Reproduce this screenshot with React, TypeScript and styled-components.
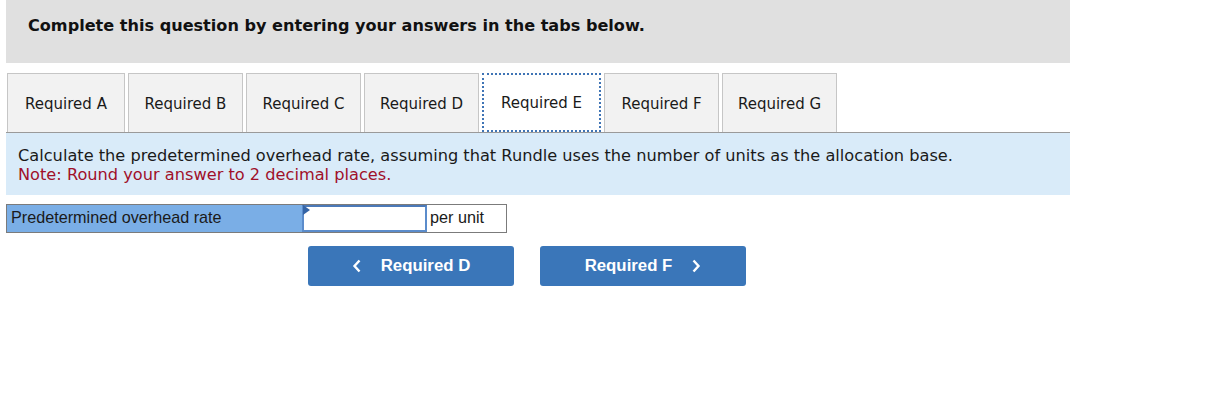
import styled, { createGlobalStyle } from 'styled-components';

const GlobalStyle = createGlobalStyle`
  body {
    margin: 0;
    background: #ffffff;
    font-family: "DejaVu Sans", Verdana, sans-serif;
  }
`;

const Page = styled.div`
  width: 1064px;
  margin-left: 6px;
`;

const Header = styled.div`
  height: 63px;
  background-color: #e0e0e0;
  padding: 16px 0 0 22px;
  box-sizing: border-box;
  h1 {
    margin: 0;
    font-size: 16.1px;
    font-weight: bold;
    color: #111;
  }
`;

const TabBar = styled.div`
  display: flex;
  gap: 3px;
  margin-top: 10px;
  padding-left: 1px;
  border-bottom: 1px solid #9a9a9a;
`;

const Tab = styled.button<{ active?: boolean; w: number }>`
  width: ${({ w }) => w}px;
  height: 59px;
  box-sizing: border-box;
  font-family: "DejaVu Sans", Verdana, sans-serif;
  font-size: 15px;
  color: #1a1a1a;
  background-color: ${({ active }) => (active ? '#ffffff' : '#f2f2f2')};
  border: ${({ active }) => (active ? '2px dotted #3f74b5' : '1px solid #c6c6c6')};
  border-bottom: ${({ active }) => (active ? '2px dotted #3f74b5' : 'none')};
  padding: 1px 0 0;
  cursor: pointer;
`;

const Instructions = styled.div`
  background-color: #d9ebf9;
  height: 62px;
  padding: 13px 0 0 12px;
  box-sizing: border-box;
  font-size: 16.2px;
  line-height: 19px;
  color: #1a1a1a;
`;

const Note = styled.div`
  color: #a0102a;
`;

const AnswerRow = styled.div`
  display: flex;
  margin-top: 9px;
  height: 29px;
  font-family: "Liberation Sans", Arial, sans-serif;
  font-size: 16.2px;
`;

const LabelCell = styled.div`
  width: 296px;
  box-sizing: border-box;
  background-color: #7aaee6;
  border: 1px solid #7b7b7b;
  border-right: none;
  color: #1a1a1a;
  padding: 3px 0 0 4px;
`;

const InputWrap = styled.div`
  position: relative;
  width: 125px;
  box-sizing: border-box;
  border-top: 1px solid #7b7b7b;
  border-bottom: 1px solid #7b7b7b;
  background: #7aaee6;
  &::before {
    content: '';
    position: absolute;
    left: 1px;
    top: 0;
    width: 0;
    height: 0;
    border-top: 5px solid transparent;
    border-bottom: 5px solid transparent;
    border-left: 7px solid #3464a6;
  }
`;

const AmountInput = styled.input`
  width: 100%;
  height: 100%;
  box-sizing: border-box;
  border: 2px solid #5b8ccb;
  border-top-color: #4b79b8;
  background: #ffffff;
  outline: none;
  margin: 0;
  padding: 0 4px;
`;

const UnitCell = styled.div`
  width: 80px;
  box-sizing: border-box;
  border: 1px solid #7b7b7b;
  border-left: none;
  padding: 3px 0 0 3px;
  color: #1a1a1a;
`;

const NavRow = styled.div`
  display: flex;
  gap: 26px;
  margin-top: 13px;
  padding-left: 302px;
`;

const NavButton = styled.button`
  width: 206px;
  height: 40px;
  background-color: #3a76b9;
  border: none;
  border-radius: 3px;
  color: #ffffff;
  font-family: "Liberation Sans", Arial, sans-serif;
  font-weight: bold;
  font-size: 16.8px;
  display: flex;
  align-items: center;
  justify-content: center;
  gap: 19px;
  cursor: pointer;
  svg {
    display: block;
  }
`;

const Chevron = ({ dir }: { dir: 'left' | 'right' }) => (
  <svg width="10" height="14" viewBox="0 0 10 14">
    <path
      d={dir === 'left' ? 'M7.5 1.5 L2.5 7 L7.5 12.5' : 'M2.5 1.5 L7.5 7 L2.5 12.5'}
      fill="none"
      stroke="#ffffff"
      strokeWidth="2.4"
    />
  </svg>
);

const tabs = [
  { id: 'A', w: 118 },
  { id: 'B', w: 115 },
  { id: 'C', w: 115 },
  { id: 'D', w: 115 },
  { id: 'E', w: 119 },
  { id: 'F', w: 115 },
  { id: 'G', w: 115 },
];

export default function App() {
  return (
    <>
      <GlobalStyle />
      <Page>
        <Header>
          <h1>Complete this question by entering your answers in the tabs below.</h1>
        </Header>
        <TabBar>
          {tabs.map((t) => (
            <Tab key={t.id} w={t.w} active={t.id === 'E'}>
              Required {t.id}
            </Tab>
          ))}
        </TabBar>
        <Instructions>
          Calculate the predetermined overhead rate, assuming that Rundle uses the number of units as the allocation base.
          <Note>Note: Round your answer to 2 decimal places.</Note>
        </Instructions>
        <AnswerRow>
          <LabelCell>Predetermined overhead rate</LabelCell>
          <InputWrap>
            <AmountInput type="text" />
          </InputWrap>
          <UnitCell>per unit</UnitCell>
        </AnswerRow>
        <NavRow>
          <NavButton>
            <Chevron dir="left" />
            Required D
          </NavButton>
          <NavButton>
            Required F
            <Chevron dir="right" />
          </NavButton>
        </NavRow>
      </Page>
    </>
  );
}
